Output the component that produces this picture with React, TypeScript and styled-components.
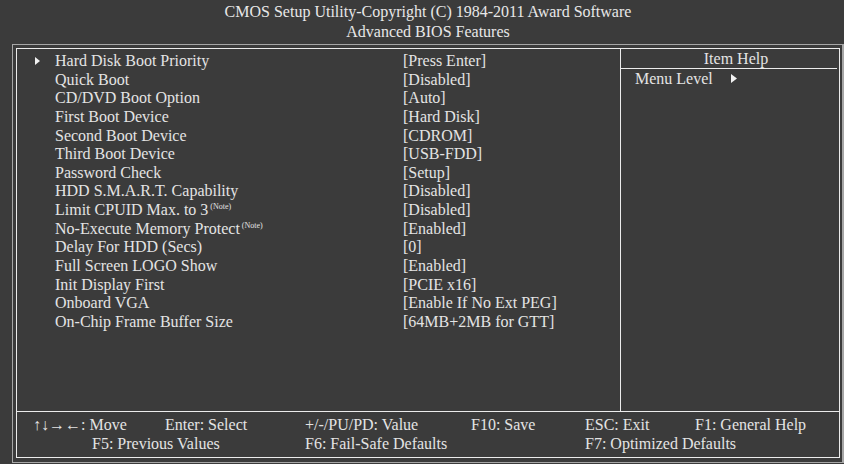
import React from "react";
import styled, { createGlobalStyle } from "styled-components";

const Global = createGlobalStyle`
  html, body { margin: 0; padding: 0; background: #3b3b3b; }
  body { width: 844px; height: 464px; overflow: hidden; font-family: "Liberation Serif", "Times New Roman", serif; color: #e4e4e4; }
`;

const Screen = styled.div`
  width: 844px;
  height: 464px;
  background: #3b3b3b;
  display: flex;
  flex-direction: column;
`;

const Header = styled.header`
  height: 44px;
  padding-top: 2px;
  box-sizing: border-box;
  text-align: center;
  font-size: 16px;
  line-height: 19.5px;
  padding-left: 12px;
  color: #e8e8e8;
`;

const OuterFrame = styled.div`
  margin-left: 12px;
  width: 832px;
  height: 419px;
  box-sizing: border-box;
  border: 1px solid #a6a6a6;
  border-right-width: 2px;
  padding: 3px 2px 4px 3px;
`;

const InnerFrame = styled.div`
  height: 100%;
  box-sizing: border-box;
  border: 1px solid #ececec;
  display: grid;
  grid-template-columns: 604px 1fr;
  grid-template-rows: 1fr 45px;
  font-size: 16px;
`;

const MainPane = styled.section`
  border-right: 1px solid #ececec;
  border-bottom: 1px solid #ececec;
  padding-top: 3px;
`;

const Row = styled.div`
  display: grid;
  grid-template-columns: 38px 348px 1fr;
  height: 18.65px;
  line-height: 18.65px;
  white-space: nowrap;
`;

const ArrowCell = styled.div`
  display: flex;
  align-items: center;
  padding-left: 18px;
`;

const Label = styled.div``;

const Note = styled.sup`
  font-size: 8px;
  line-height: 0;
  vertical-align: 6px;
  margin-left: 2px;
`;

const Value = styled.div``;

const HelpPane = styled.aside`
  border-bottom: 1px solid #ececec;
  display: flex;
  flex-direction: column;
`;

const HelpTitle = styled.div`
  height: 19px;
  line-height: 19px;
  margin-right: 2px;
  text-align: center;
  padding-left: 14px;
  border-bottom: 1px solid #ececec;
`;

const HelpLine = styled.div`
  display: flex;
  align-items: center;
  gap: 18px;
  padding-left: 14px;
  height: 19px;
  line-height: 19px;
`;

const Footer = styled.footer`
  grid-column: 1 / 3;
  display: grid;
  grid-template-columns: 132px 140px 166px 114px 110px 1fr;
  grid-template-rows: 19px 19px;
  line-height: 19px;
  padding: 3px 0 0 16px;
  white-space: nowrap;
`;

const Key = styled.span<{ $col?: string; $indent?: number }>`
  ${(p) => (p.$col ? `grid-column: ${p.$col};` : "")}
  ${(p) => (p.$indent ? `padding-left: ${p.$indent}px;` : "")}
`;

const Tri = ({ w, h }: { w: number; h: number }) => (
  <svg width={w} height={h} viewBox={`0 0 ${w} ${h}`}>
    <polygon points={`0,0 ${w},${h / 2} 0,${h}`} fill="#f2f2f2" />
  </svg>
);

type Item = { label: string; value: string; note?: boolean; sub?: boolean };

const items: Item[] = [
  { label: "Hard Disk Boot Priority", value: "[Press Enter]", sub: true },
  { label: "Quick Boot", value: "[Disabled]" },
  { label: "CD/DVD Boot Option", value: "[Auto]" },
  { label: "First Boot Device", value: "[Hard Disk]" },
  { label: "Second Boot Device", value: "[CDROM]" },
  { label: "Third Boot Device", value: "[USB-FDD]" },
  { label: "Password Check", value: "[Setup]" },
  { label: "HDD S.M.A.R.T. Capability", value: "[Disabled]" },
  { label: "Limit CPUID Max. to 3", value: "[Disabled]", note: true },
  { label: "No-Execute Memory Protect", value: "[Enabled]", note: true },
  { label: "Delay For HDD (Secs)", value: "[0]" },
  { label: "Full Screen LOGO Show", value: "[Enabled]" },
  { label: "Init Display First", value: "[PCIE x16]" },
  { label: "Onboard VGA", value: "[Enable If No Ext PEG]" },
  { label: "On-Chip Frame Buffer Size", value: "[64MB+2MB for GTT]" },
];

export default function App() {
  return (
    <Screen>
      <Global />
      <Header>
        <div>CMOS Setup Utility-Copyright (C) 1984-2011 Award Software</div>
        <div>Advanced BIOS Features</div>
      </Header>
      <OuterFrame>
        <InnerFrame>
          <MainPane>
            {items.map((it) => (
              <Row key={it.label}>
                <ArrowCell>{it.sub ? <Tri w={5} h={8} /> : null}</ArrowCell>
                <Label>
                  {it.label}
                  {it.note ? <Note>(Note)</Note> : null}
                </Label>
                <Value>{it.value}</Value>
              </Row>
            ))}
          </MainPane>
          <HelpPane>
            <HelpTitle>Item Help</HelpTitle>
            <HelpLine>
              <span>Menu Level</span>
              <Tri w={6} h={9} />
            </HelpLine>
          </HelpPane>
          <Footer>
            <Key>↑↓→←: Move</Key>
            <Key>Enter: Select</Key>
            <Key>+/-/PU/PD: Value</Key>
            <Key>F10: Save</Key>
            <Key>ESC: Exit</Key>
            <Key>F1: General Help</Key>
            <Key $col="1 / 3" $indent={59}>F5: Previous Values</Key>
            <Key $col="3 / 5">F6: Fail-Safe Defaults</Key>
            <Key $col="5 / 7">F7: Optimized Defaults</Key>
          </Footer>
        </InnerFrame>
      </OuterFrame>
    </Screen>
  );
}
